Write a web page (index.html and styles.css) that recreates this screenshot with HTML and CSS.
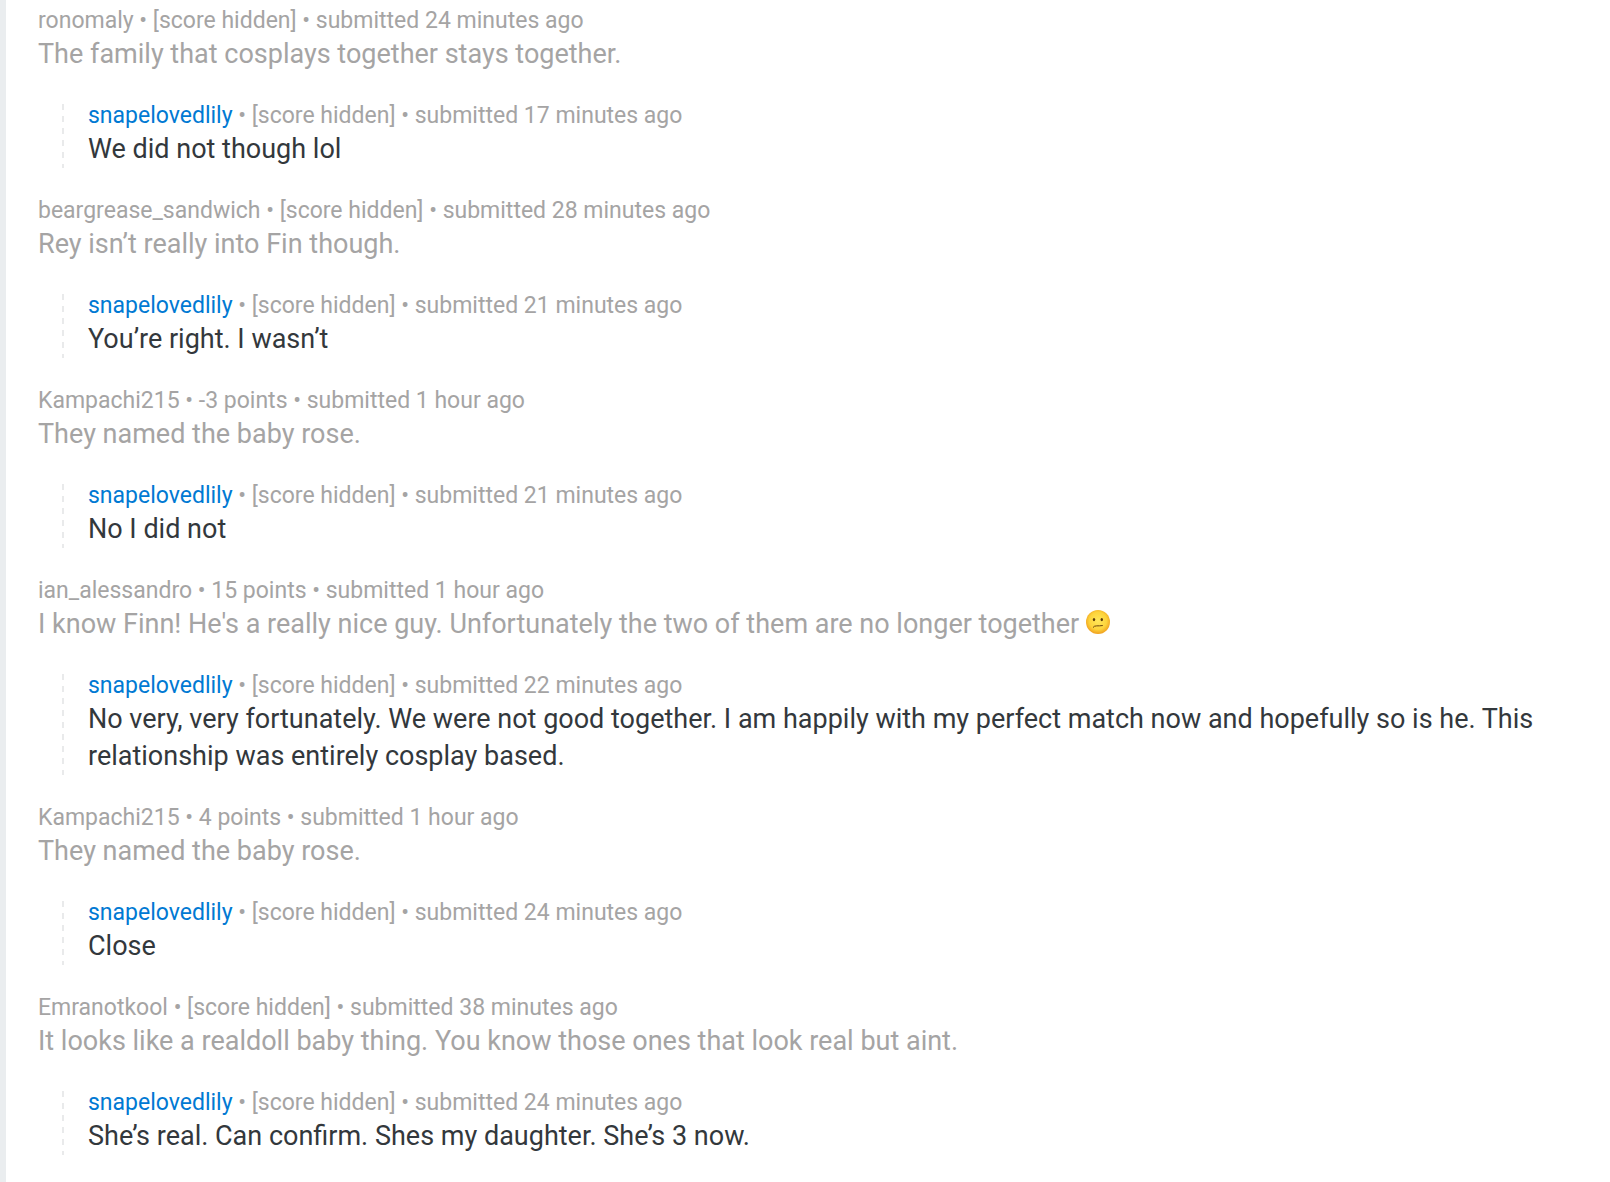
FILE: index.html
```html
<!DOCTYPE html>
<html lang="en">
<head>
    <meta charset="UTF-8">
    <meta name="viewport" content="width=device-width, initial-scale=1.0">
    <title>Comments</title>
    <link rel="stylesheet" href="styles.css">
</head>
<body>
    <main class="thread">
        <article class="comment parent">
            <p class="meta">ronomaly • [score hidden] • submitted 24 minutes ago</p>
            <p class="text">The family that cosplays together stays together.</p>
        </article>
        <article class="comment reply">
            <p class="meta"><a href="#">snapelovedlily</a> • [score hidden] • submitted 17 minutes ago</p>
            <p class="text">We did not though lol</p>
        </article>

        <article class="comment parent">
            <p class="meta">beargrease_sandwich • [score hidden] • submitted 28 minutes ago</p>
            <p class="text">Rey isn’t really into Fin though.</p>
        </article>
        <article class="comment reply">
            <p class="meta"><a href="#">snapelovedlily</a> • [score hidden] • submitted 21 minutes ago</p>
            <p class="text">You’re right. I wasn’t</p>
        </article>

        <article class="comment parent">
            <p class="meta">Kampachi215 • -3 points • submitted 1 hour ago</p>
            <p class="text">They named the baby rose.</p>
        </article>
        <article class="comment reply">
            <p class="meta"><a href="#">snapelovedlily</a> • [score hidden] • submitted 21 minutes ago</p>
            <p class="text">No I did not</p>
        </article>

        <article class="comment parent">
            <p class="meta">ian_alessandro • 15 points • submitted 1 hour ago</p>
            <p class="text">I know Finn! He's a really nice guy. Unfortunately the two of them are no longer together
                <svg class="emoji" viewBox="0 0 24 24" role="img" aria-label="confused face">
                    <defs>
                        <radialGradient id="face" cx="50%" cy="45%" r="55%">
                            <stop offset="0" stop-color="#ffe75a"/>
                            <stop offset="0.65" stop-color="#fdd43c"/>
                            <stop offset="1" stop-color="#f0a01e"/>
                        </radialGradient>
                    </defs>
                    <circle cx="12" cy="12" r="12" fill="url(#face)"/>
                    <ellipse cx="8" cy="9.6" rx="1.2" ry="1.7" fill="#5c3a0a"/>
                    <ellipse cx="15.8" cy="9.6" rx="1.2" ry="1.7" fill="#5c3a0a"/>
                    <path d="M7.2 17.2C8.6 14.9 12 16.4 16.4 15.6" fill="none" stroke="#6e460c" stroke-width="1" stroke-linecap="round"/>
                </svg>
            </p>
        </article>
        <article class="comment reply">
            <p class="meta"><a href="#">snapelovedlily</a> • [score hidden] • submitted 22 minutes ago</p>
            <p class="text">No very, very fortunately. We were not good together. I am happily with my perfect match now and hopefully so is he. This relationship was entirely cosplay based.</p>
        </article>

        <article class="comment parent">
            <p class="meta">Kampachi215 • 4 points • submitted 1 hour ago</p>
            <p class="text">They named the baby rose.</p>
        </article>
        <article class="comment reply">
            <p class="meta"><a href="#">snapelovedlily</a> • [score hidden] • submitted 24 minutes ago</p>
            <p class="text">Close</p>
        </article>

        <article class="comment parent">
            <p class="meta">Emranotkool • [score hidden] • submitted 38 minutes ago</p>
            <p class="text">It looks like a realdoll baby thing. You know those ones that look real but aint.</p>
        </article>
        <article class="comment reply">
            <p class="meta"><a href="#">snapelovedlily</a> • [score hidden] • submitted 24 minutes ago</p>
            <p class="text">She’s real. Can confirm. Shes my daughter. She’s 3 now.</p>
        </article>
    </main>
</body>
</html>
```
FILE: styles.css
```css
* {
    margin: 0;
    padding: 0;
    box-sizing: border-box;
}

body {
    font-family: Roboto, Arial, sans-serif;
    background-color: #fff;
    color: #33383c;
}

.thread {
    display: flex;
    flex-direction: column;
    gap: 31px;
    min-height: 100vh;
    padding: 9px 32px 24px;
    border-left: 6px solid #eaedef;
}

.meta {
    margin-bottom: 3px;
    font-size: 23px;
    line-height: 24px;
    color: #a5a4a4;
}

.meta a {
    color: #0079d3;
    text-decoration: none;
}

.meta a:hover {
    text-decoration: underline;
}

.text {
    font-size: 27px;
    line-height: 37px;
}

.parent .text {
    color: #a5a4a4;
}

/* dashed thread line, 6px on / 6px off */
.reply {
    margin-left: 24px;
    padding-left: 26px;
    background: repeating-linear-gradient(#e9eaeb 0 6px, #fff 6px 12px) left top / 2px 100% no-repeat;
}

.emoji {
    width: 24px;
    height: 24px;
    vertical-align: -1px;
}
```
